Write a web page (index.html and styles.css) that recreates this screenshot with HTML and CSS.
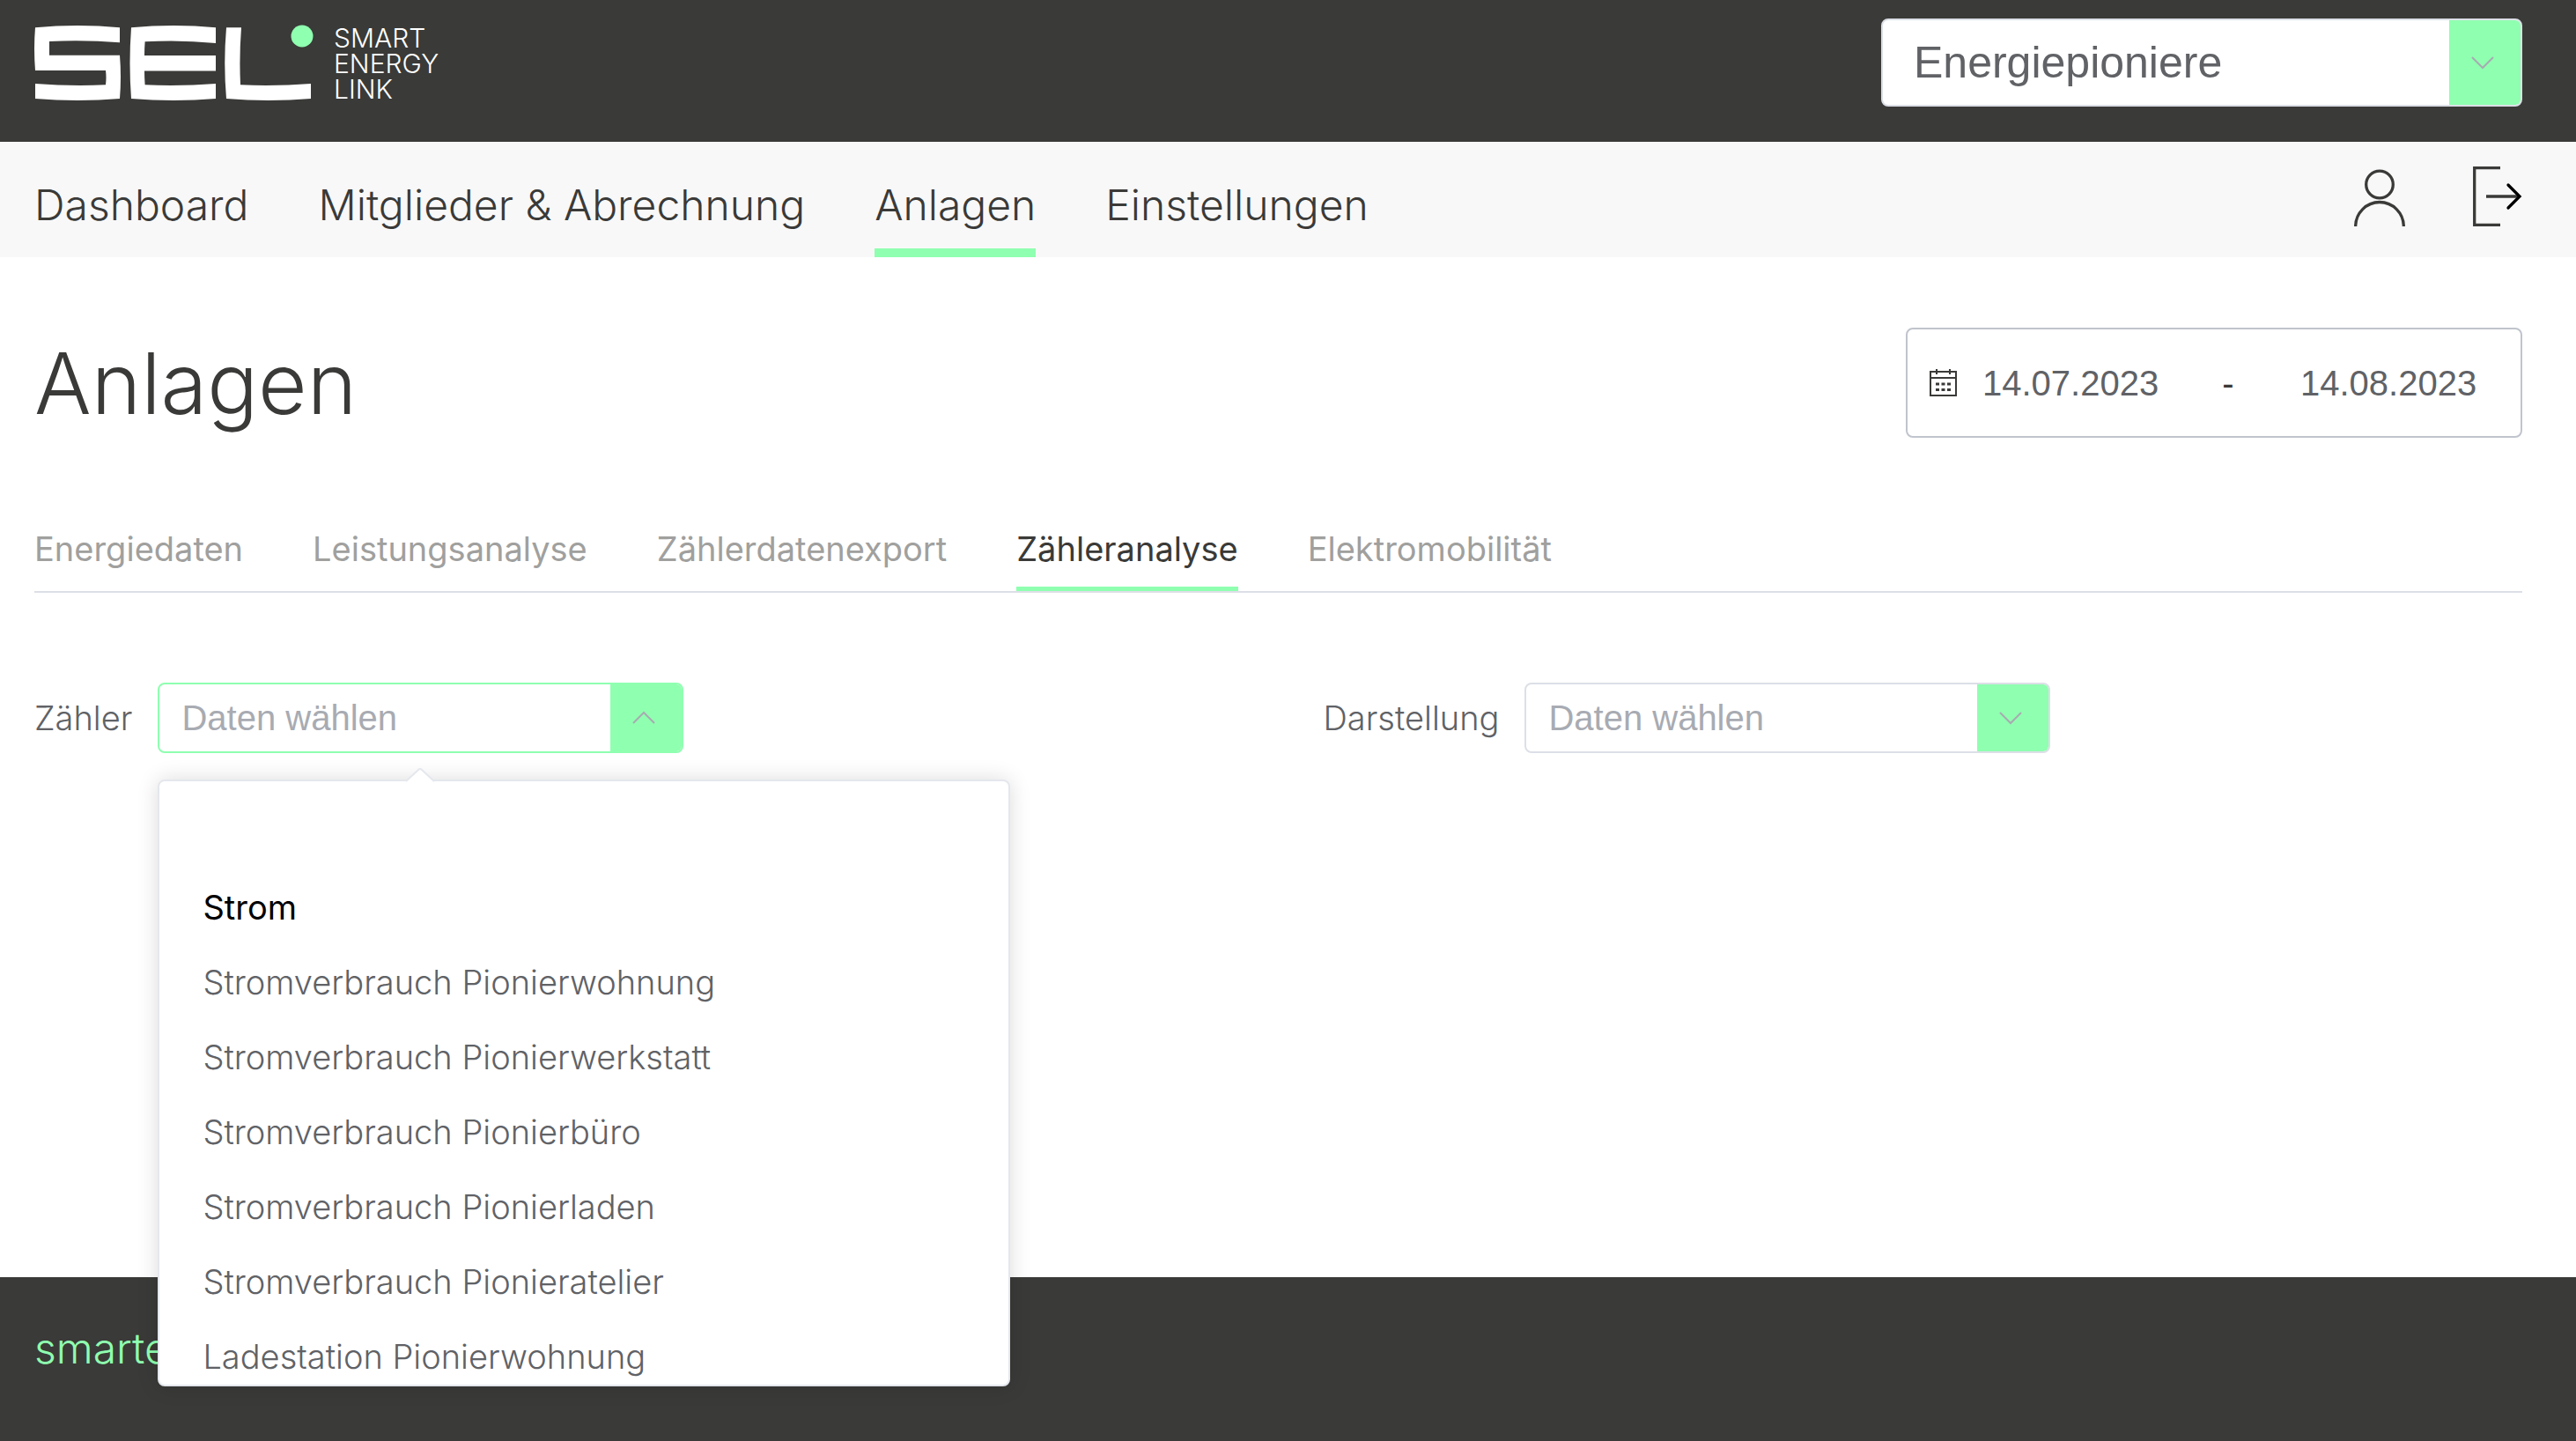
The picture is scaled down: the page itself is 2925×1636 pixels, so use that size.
FILE: index.html
```html
<!DOCTYPE html>
<html lang="de">
<head>
<meta charset="utf-8">
<meta name="viewport" content="width=device-width, initial-scale=1">
<title>Anlagen – Smart Energy Link</title>
<link rel="stylesheet" href="styles.css">
</head>
<body>
<header class="topbar">
  <a class="brand" href="#" aria-label="Smart Energy Link">
    <svg class="brand-mark" viewBox="39 28 317 88" aria-hidden="true">
      <g fill="#fff">
        <path d="M40 31.3Q88 26.8 136 31.3V48.3Q96 45 56 47V62.7H136Q138 87 136 112Q88 116 40 112V95Q80 98 120 96.3Q121 88 120 80H40Q38 55 40 31.3Z"/>
        <path d="M149 31.3Q197 26.8 245 31.3V49Q205 45 164.6 47.3Q164 55 164 63H245V80.500H164Q164 88 164.600 96.300Q205 98 245 95V112Q197 116 149 112Q146 72 149 31.300Z"/>
        <path d="M257 31.300H274Q271.500 64 273 96.300Q313 98 353 95V112Q305 116 257 112Q253.500 72 257 31.300Z"/>
      </g>
      <circle cx="343" cy="41" r="12.500" fill="#8fffb0"/>
    </svg>
    <span class="brand-name">SMART<br>ENERGY<br>LINK</span>
  </a>
  <div class="select select-large">
    <select aria-label="Gemeinschaft"><option>Energiepioniere</option></select>
    <span class="select-arrow"><svg viewBox="0 0 28 16" aria-hidden="true"><path d="M2 2L14 14L26 2"/></svg></span>
  </div>
</header>

<nav class="mainnav" aria-label="Hauptnavigation">
  <div class="mainnav-links">
    <a href="#">Dashboard</a>
    <a href="#">Mitglieder &amp; Abrechnung</a>
    <a href="#" class="active" aria-current="page">Anlagen</a>
    <a href="#">Einstellungen</a>
  </div>
  <div class="mainnav-icons">
    <button type="button" aria-label="Profil">
      <svg width="60" height="70" viewBox="0 0 60 70" fill="none" stroke="#3a3a38" stroke-width="3.300">
        <circle cx="30" cy="20.500" r="15.300"/>
        <path d="M2.700 68A27.300 27.500 0 0 1 57.300 68"/>
      </svg>
    </button>
    <button type="button" aria-label="Abmelden">
      <svg width="56" height="70" viewBox="0 0 56 70" fill="none" stroke="#3a3a38" stroke-width="3.300">
        <path d="M31 1.700H1.700V66.300H31M15 34H53"/>
        <path d="M40 21L53 34L40 47" stroke="#000" stroke-linecap="round"/>
      </svg>
    </button>
  </div>
</nav>

<main class="content">
  <div class="title-row">
    <h1>Anlagen</h1>
    <div class="daterange">
      <svg width="31" height="32" viewBox="0 0 31 32" fill="none" stroke="#3a3a38" stroke-width="2" aria-hidden="true">
        <path d="M1 3H30V30H1ZM1 10H30M8 0V6M23 0V6"/>
        <path d="M7 17H25M7 23.500H25" stroke-width="3" stroke-dasharray="4 2.500"/>
      </svg>
      <input type="text" value="14.07.2023" aria-label="Startdatum">
      <span class="dash">-</span>
      <input type="text" value="14.08.2023" aria-label="Enddatum">
    </div>
  </div>

  <nav class="tabs" aria-label="Bereiche">
    <a href="#">Energiedaten</a>
    <a href="#">Leistungsanalyse</a>
    <a href="#">Zählerdatenexport</a>
    <a href="#" class="active" aria-current="page">Zähleranalyse</a>
    <a href="#">Elektromobilität</a>
  </nav>

  <form class="filters">
    <div class="field">
      <label for="meter">Zähler</label>
      <div class="select open">
        <select id="meter"><option>Daten wählen</option></select>
        <span class="select-arrow"><svg viewBox="0 0 28 16" aria-hidden="true"><path d="M2 14L14 2L26 14"/></svg></span>
        <div class="popup">
          <svg class="popup-tip" width="32" height="16" viewBox="0 0 32 16" aria-hidden="true"><path d="M0 15L16 1L32 15V16H0Z" fill="#fff"/><path d="M0 15L14 2Q16 0 18 2L32 15" fill="none" stroke="#e4e7ed" stroke-width="2"/></svg>
          <ul class="options">
            <li class="group">Strom</li>
            <li>Stromverbrauch Pionierwohnung</li>
            <li>Stromverbrauch Pionierwerkstatt</li>
            <li>Stromverbrauch Pionierbüro</li>
            <li>Stromverbrauch Pionierladen</li>
            <li>Stromverbrauch Pionieratelier</li>
            <li>Ladestation Pionierwohnung</li>
          </ul>
        </div>
      </div>
    </div>
    <div class="field">
      <label for="view">Darstellung</label>
      <div class="select">
        <select id="view"><option>Daten wählen</option></select>
        <span class="select-arrow"><svg viewBox="0 0 28 16" aria-hidden="true"><path d="M2 2L14 14L26 2"/></svg></span>
      </div>
    </div>
  </form>
</main>

<footer class="footer"><a href="#">smarte</a></footer>
</body>
</html>
```

FILE: styles.css
```css
:root {
  --dark: #3a3a38;
  --mint: #8fffb0;
  --line: #dcdfe6;
  --grey: #606266;
  --ui: Inter, "Liberation Sans", sans-serif;
  --form: "Liberation Sans", Arial, sans-serif;
}

* { box-sizing: border-box; }

body {
  margin: 0;
  min-height: 100vh;
  display: flex;
  flex-direction: column;
  background: #fff;
  color: var(--dark);
  font: 300 38px/48px var(--ui);
}

a { color: inherit; text-decoration: none; }

.topbar {
  display: flex;
  justify-content: space-between;
  align-items: flex-start;
  padding: 21px 61px 40px 39px;
  background: var(--dark);
}

.brand {
  display: flex;
  gap: 23px;
  padding-top: 7px;
  color: #fff;
}

.brand-mark { width: 317px; height: 88px; }

.brand-name { padding-top: 1px; font-size: 30px; line-height: 29px; }

.select {
  position: relative;
  display: flex;
  width: 597px;
  height: 80px;
  border: 2px solid var(--line);
  border-radius: 8px;
  background: #fff;
}

.select.open { border-color: var(--mint); }

.select select {
  flex: 1;
  min-width: 0;
  padding: 0 25px;
  border: 0;
  background: none;
  appearance: none;
  color: #a8abb2;
  font: 400 40px/48px var(--form);
}

.select-arrow {
  display: flex;
  align-items: center;
  justify-content: center;
  width: 81px;
  padding-right: 6px;
  border-radius: 0 6px 6px 0;
  background: var(--mint);
}

.select-arrow svg {
  width: 28px;
  height: 16px;
  fill: none;
  stroke: #a8abb2;
  stroke-width: 2;
}

.select-large { width: 728px; height: 100px; }

.select-large select {
  padding: 0 35px;
  color: var(--grey);
  font-size: 50px;
  line-height: 60px;
}

.mainnav {
  display: flex;
  justify-content: space-between;
  padding: 0 61px 0 39px;
  background: #f8f8f8;
}

.mainnav-links { display: flex; gap: 79px; }

.mainnav-links a {
  padding: 42px 0 19px;
  border-bottom: 10px solid transparent;
  font-size: 48px;
  line-height: 60px;
}

.mainnav-links .active { border-color: var(--mint); }

.mainnav-icons {
  display: flex;
  align-items: flex-start;
  gap: 76px;
  padding-top: 28px;
}

.mainnav-icons button {
  display: flex;
  padding: 0;
  border: 0;
  background: none;
}

.content { flex: 1; padding: 80px 61px 0 39px; }

.title-row {
  display: flex;
  justify-content: space-between;
  align-items: flex-start;
}

h1 {
  margin: 0;
  font-size: 96px;
  font-weight: 300;
  line-height: 126px;
}

.daterange {
  display: flex;
  align-items: center;
  width: 700px;
  height: 125px;
  padding: 0 24px 0 25px;
  border: 2px solid #c0c4cc;
  border-radius: 8px;
  font-family: var(--form);
  font-size: 40px;
  font-weight: 400;
}

.daterange input {
  width: 255px;
  padding: 0 26px 0 29px;
  border: 0;
  background: none;
  color: var(--grey);
  font: inherit;
}

.daterange .dash { flex: 1; text-align: center; }

.tabs {
  display: flex;
  gap: 79px;
  margin-top: 101px;
  border-bottom: 2px solid var(--line);
  color: #a0a09e;
  font-weight: 400;
}

.tabs a { padding-bottom: 19px; border-bottom: 5px solid transparent; }

.tabs .active { border-color: var(--mint); color: var(--dark); }

.filters {
  display: grid;
  grid-template-columns: 1fr 1fr;
  gap: 102px;
  margin-top: 102px;
}

.field {
  display: flex;
  align-items: center;
  gap: 29px;
  color: var(--grey);
}

.popup {
  position: absolute;
  z-index: 2;
  top: 108px;
  left: -2px;
  width: 968px;
  height: 689px;
  border: 2px solid #e4e7ed;
  border-radius: 8px;
  background: #fff;
  box-shadow: 0 0 24px rgba(0, 0, 0, 0.14);
}

.popup-tip { position: absolute; top: -15px; left: 280px; }

.options {
  height: 100%;
  margin: 0;
  padding: 101px 49px 0;
  overflow: hidden;
  list-style: none;
  line-height: 85px;
}

.options .group { color: #000; font-weight: 400; }

.footer {
  padding: 51px 39px 75px;
  background: var(--dark);
  color: var(--mint);
  font-size: 48px;
  line-height: 60px;
}
```
